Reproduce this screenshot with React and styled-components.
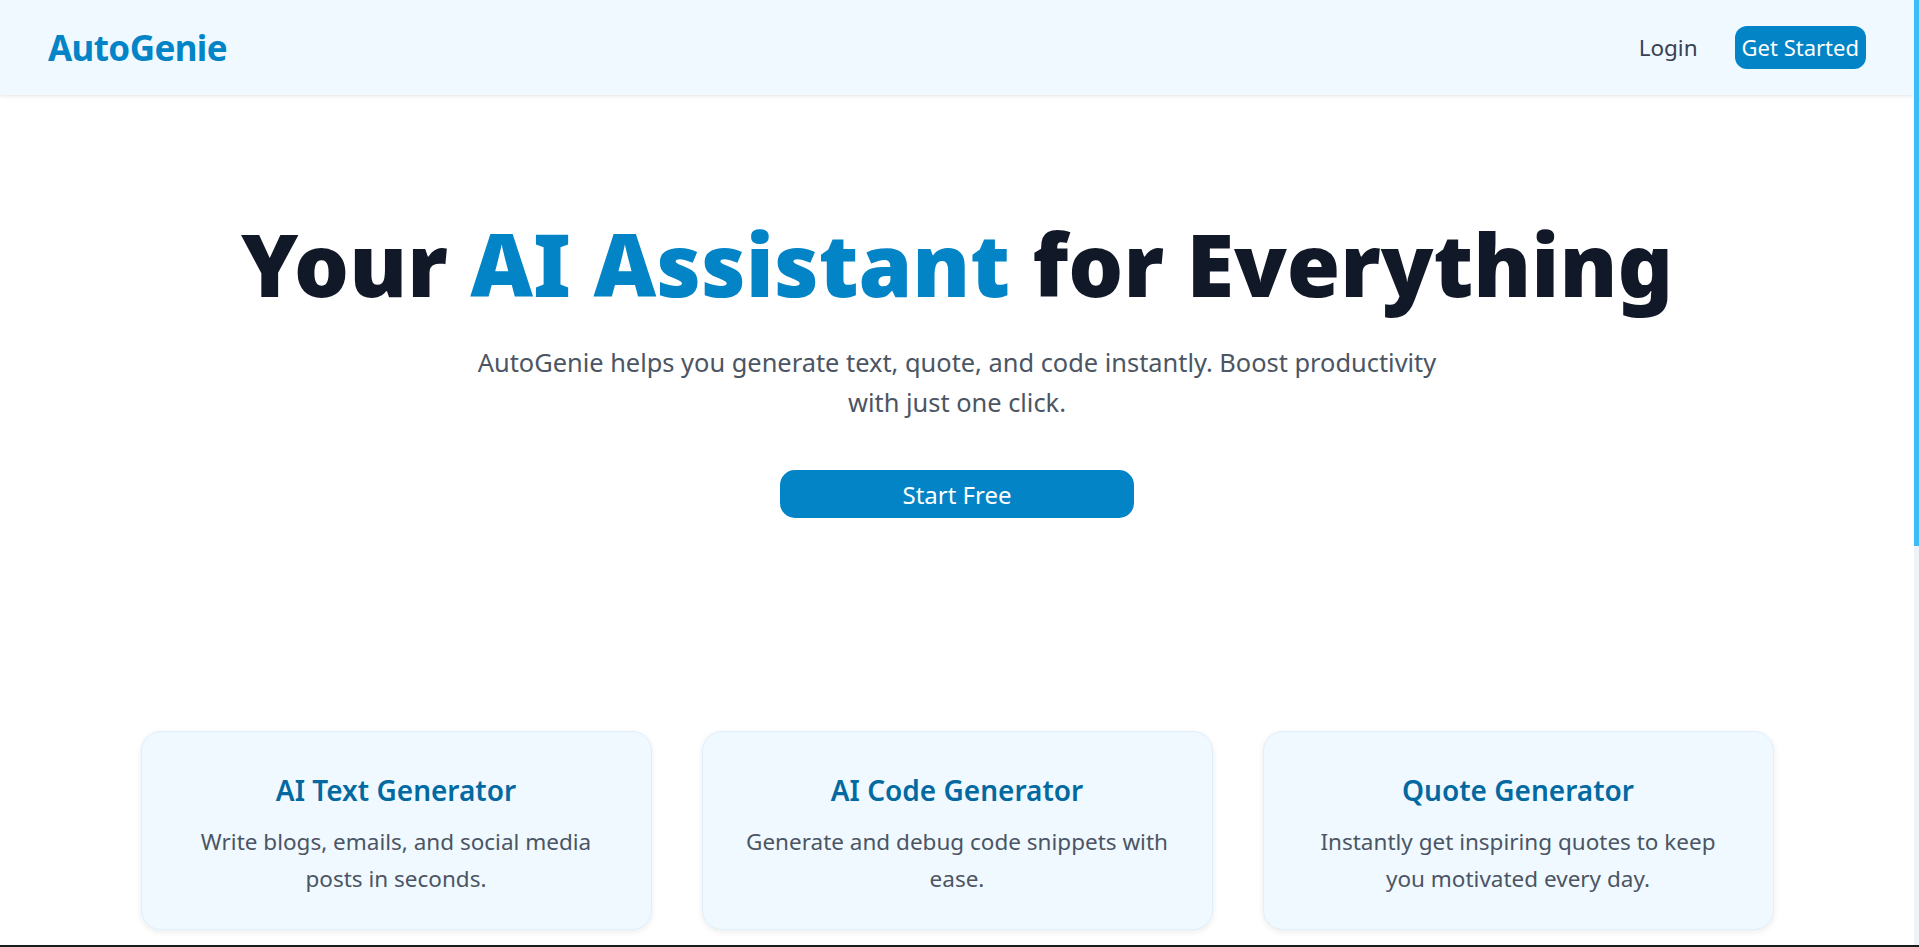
import React from "react";
import styled, { createGlobalStyle } from "styled-components";

const GlobalStyle = createGlobalStyle`
  html, body {
    margin: 0;
    padding: 0;
    height: 100%;
    overflow: hidden;
    background: #ffffff;
  }
  * {
    box-sizing: border-box;
  }
  #root {
    height: 100%;
  }
`;

const features = [
  {
    title: "AI Text Generator",
    text: "Write blogs, emails, and social media posts in seconds.",
  },
  {
    title: "AI Code Generator",
    text: "Generate and debug code snippets with ease.",
  },
  {
    title: "Quote Generator",
    text: "Instantly get inspiring quotes to keep you motivated every day.",
  },
];

const App = () => {
  return (
    <>
      <GlobalStyle />
      <Frame>
        <Viewport>
          <Page>
            <NavBar>
              <Logo>AutoGenie</Logo>
              <NavLinks>
                <LoginLink href="#">Login</LoginLink>
                <CtaButton>Get Started</CtaButton>
              </NavLinks>
            </NavBar>

            <Hero>
              <Title>
                Your <Accent>AI Assistant</Accent> for Everything
              </Title>
              <Lead>
                AutoGenie helps you generate text, quote, and code instantly. Boost productivity
                with just one click.
              </Lead>
              <StartButton>Start Free</StartButton>
            </Hero>

            <Features>
              {features.map((f) => (
                <Card key={f.title}>
                  <CardTitle>{f.title}</CardTitle>
                  <CardText>{f.text}</CardText>
                </Card>
              ))}
            </Features>
          </Page>
          {/* custom scrollbar, page is taller than the window */}
          <ScrollTrack>
            <ScrollThumb />
          </ScrollTrack>
        </Viewport>
        <BottomEdge />
      </Frame>
    </>
  );
};

export default App;

const Frame = styled.div`
  height: 100%;
  display: flex;
  flex-direction: column;
  font-family: "Noto Sans", "Open Sans", sans-serif;
`;

const Viewport = styled.div`
  flex: 1;
  min-height: 0;
  display: flex;
  overflow: hidden;
`;

const Page = styled.main`
  flex: 1;
  min-width: 0;
  overflow: hidden;
`;

const ScrollTrack = styled.div`
  width: 5px;
  flex-shrink: 0;
  background: #eff3f8;
`;

const ScrollThumb = styled.div`
  height: 546px;
  background: #38bdf8;
`;

const BottomEdge = styled.div`
  height: 2px;
  flex-shrink: 0;
  background: #1c1c1e;
`;

const NavBar = styled.header`
  height: 95px;
  display: flex;
  align-items: center;
  justify-content: space-between;
  padding: 0 48px;
  background: #f0f9ff;
  box-shadow: 0 1px 4px rgba(15, 23, 42, 0.12);
`;

const Logo = styled.div`
  font-size: 35px;
  font-weight: 700;
  letter-spacing: -0.6px;
  color: #0284c7;
  line-height: 1;
`;

const NavLinks = styled.nav`
  display: flex;
  align-items: center;
  gap: 37px;
`;

const LoginLink = styled.a`
  font-size: 22.5px;
  color: #374151;
  text-decoration: none;
`;

const CtaButton = styled.button`
  font-family: inherit;
  font-size: 22px;
  line-height: 35px;
  color: #ffffff;
  background: #0284c7;
  border: none;
  border-radius: 12px;
  padding: 4px 7px;
`;

const Hero = styled.section`
  display: flex;
  flex-direction: column;
  align-items: center;
  padding-top: 125px;
  text-align: center;
`;

const Title = styled.h1`
  margin: 0;
  font-size: 86.5px;
  font-weight: 900;
  line-height: 87px;
  color: #111827;
  white-space: nowrap;
`;

const Accent = styled.span`
  color: #0284c7;
`;

const Lead = styled.p`
  margin: 35px 0 0;
  max-width: 975px;
  font-size: 25.4px;
  line-height: 40px;
  color: #4b5563;
`;

const StartButton = styled.button`
  margin-top: 48px;
  width: 354px;
  height: 48px;
  font-family: inherit;
  font-size: 24px;
  color: #ffffff;
  background: #0284c7;
  border: none;
  border-radius: 15px;
`;

const Features = styled.section`
  display: grid;
  grid-template-columns: repeat(3, 1fr);
  gap: 50px;
  max-width: 1633px;
  margin: 213px auto 0;
  padding-bottom: 705px;
`;

const Card = styled.div`
  background: #f0f9ff;
  border: 1px solid #e0effb;
  border-radius: 20px;
  box-shadow: 0 2px 6px rgba(15, 23, 42, 0.08);
  padding: 38px 40px 32px;
  text-align: center;
`;

const CardTitle = styled.h3`
  margin: 0 0 13px;
  font-size: 28px;
  line-height: 40px;
  font-weight: 600;
  color: #0369a1;
`;

const CardText = styled.p`
  margin: 0;
  font-size: 22.5px;
  line-height: 37px;
  color: #4b5563;
`;
